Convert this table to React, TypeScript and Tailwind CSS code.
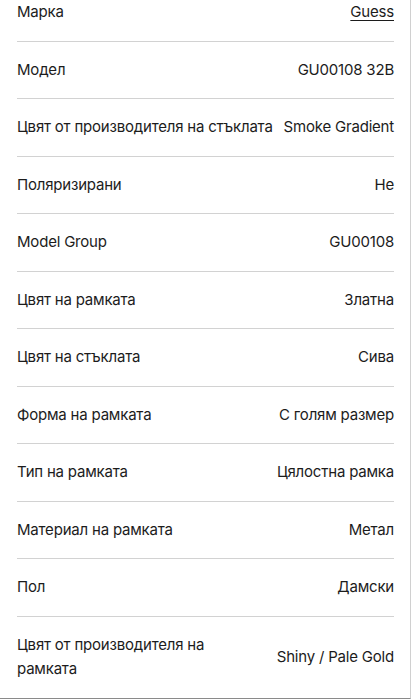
import React from "react";

const specs: { label: string; value: string; link?: boolean; narrow?: boolean }[] = [
  { label: "Марка", value: "Guess", link: true },
  { label: "Модел", value: "GU00108 32B" },
  { label: "Цвят от производителя на стъклата", value: "Smoke Gradient" },
  { label: "Поляризирани", value: "Не" },
  { label: "Model Group", value: "GU00108" },
  { label: "Цвят на рамката", value: "Златна" },
  { label: "Цвят на стъклата", value: "Сива" },
  { label: "Форма на рамката", value: "С голям размер" },
  { label: "Тип на рамката", value: "Цялостна рамка" },
  { label: "Материал на рамката", value: "Метал" },
  { label: "Пол", value: "Дамски" },
  { label: "Цвят от производителя на рамката", value: "Shiny / Pale Gold", narrow: true },
];

export default function App() {
  return (
    <div
      className="w-[411px] h-[699px] overflow-hidden bg-white border-r border-b border-[#8a8a8a] border-r-[#d0d0d0] text-[#1c1c1c] text-[15px] tracking-[-0.2px]"
      style={{ fontFamily: "Inter, 'Noto Sans', sans-serif" }}
    >
      <div className="pl-[17px] pr-4">
        {specs.map((s, i) => (
          <div
            key={i}
            className={`flex items-center justify-between gap-2 border-b border-[#d2d2d2] pb-[16px] ${
              i === 0 ? "pt-0" : "pt-[16px]"
            }`}
          >
            <span
              className={`leading-[24.5px] min-w-0 ${
                s.narrow ? "max-w-[230px]" : "whitespace-nowrap"
              }`}
            >
              {s.label}
            </span>
            <span
              className={`leading-[24.5px] text-right shrink-0 ${
                s.link ? "underline underline-offset-[3px]" : ""
              }`}
            >
              {s.value}
            </span>
          </div>
        ))}
      </div>
    </div>
  );
}
